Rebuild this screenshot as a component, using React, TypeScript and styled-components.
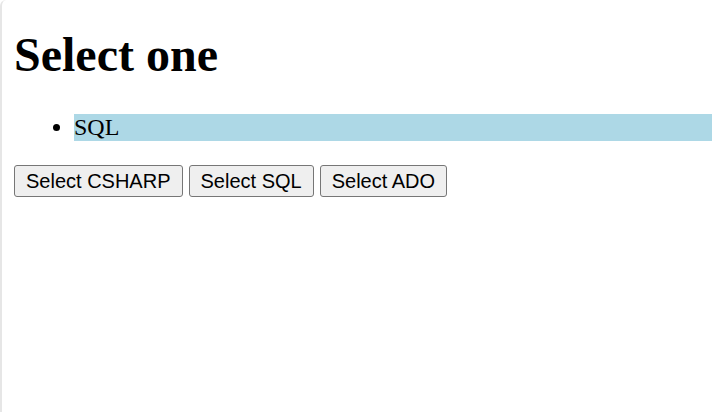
import React from "react";
import styled, { createGlobalStyle } from "styled-components";

const GlobalStyle = createGlobalStyle`
  html, body { margin: 0; padding: 0; background: #ffffff; }
  body { font-family: "Liberation Serif", "Times New Roman", serif; color: #000; }
`;

const Frame = styled.div`
  display: flow-root;
  box-sizing: border-box;
  min-height: 412px;
  padding-left: 12px;
  border-left: 2px solid #e6e6e6;
  border-top-left-radius: 6px;
`;

const Heading = styled.h1`
  margin: 27px 0 32px;
  font-family: "Liberation Serif", "Times New Roman", serif;
  font-size: 48px;
  font-weight: bold;
`;

const List = styled.ul`
  margin: 0 0 24px;
  padding-left: 60px;
  list-style: disc;
`;

const Item = styled.li<{ $selected?: boolean }>`
  font-size: 24px;
  background: ${(p) => (p.$selected ? "#add8e6" : "transparent")};
`;

const Toolbar = styled.div`
  display: flex;
  gap: 6px;
`;

const Button = styled.button`
  box-sizing: border-box;
  height: 32px;
  padding: 0 11px;
  font-family: "Liberation Sans", Arial, sans-serif;
  font-size: 20px;
  color: #000;
  background: #efefef;
  border: 1px solid #767676;
  border-radius: 3px;
  cursor: pointer;
`;

export default function App() {
  const [selected, setSelected] = React.useState("SQL");
  return (
    <>
      <GlobalStyle />
      <Frame>
        <Heading>Select one</Heading>
        <List>
          <Item $selected>{selected}</Item>
        </List>
        <Toolbar>
          <Button onClick={() => setSelected("CSHARP")}>Select CSHARP</Button>
          <Button onClick={() => setSelected("SQL")}>Select SQL</Button>
          <Button onClick={() => setSelected("ADO")}>Select ADO</Button>
        </Toolbar>
      </Frame>
    </>
  );
}
